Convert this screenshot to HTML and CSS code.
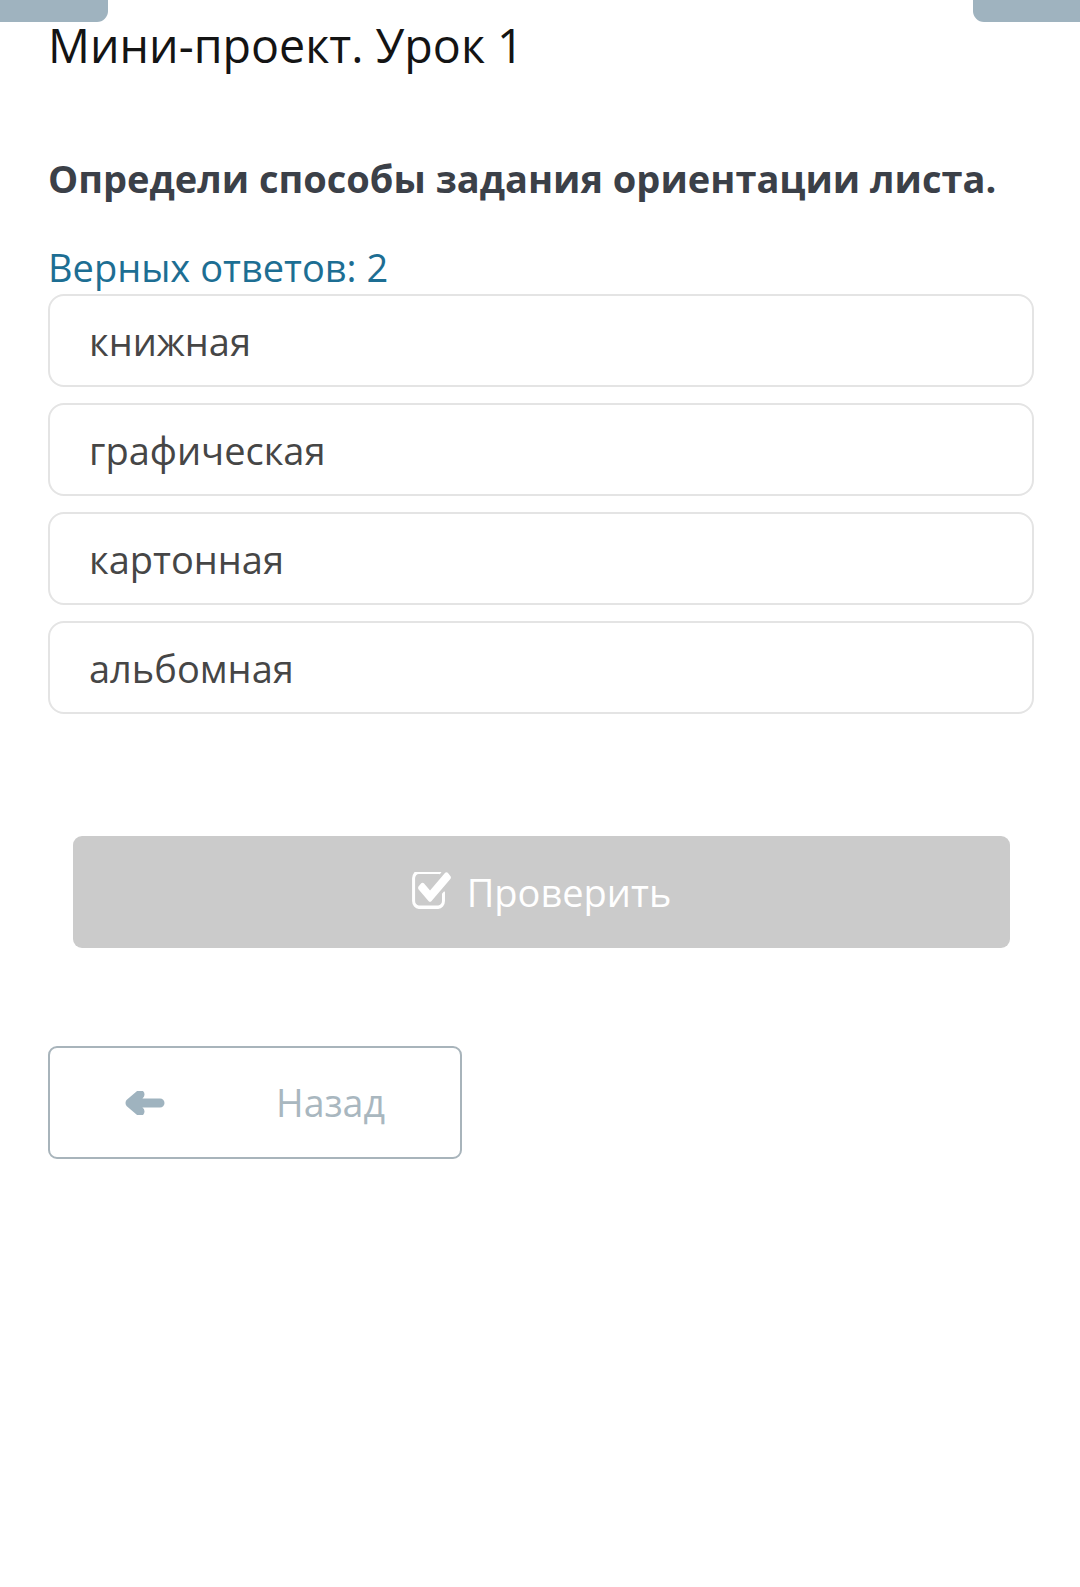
FILE: index.html
```html
<!DOCTYPE html>
<html lang="ru">
<head>
<meta charset="utf-8">
<title>Мини-проект. Урок 1</title>
<link rel="stylesheet" href="styles.css">
</head>
<body>
<div class="page">
  <div class="tabs">
    <div class="tab tab-left"></div>
    <div class="tab tab-right"></div>
  </div>
  <main class="content">
    <h1 class="title">Мини-проект. Урок 1</h1>
    <h2 class="question">Определи способы задания ориентации листа.</h2>
    <div class="hint">Верных ответов: 2</div>
    <ul class="options">
      <li class="option">книжная</li>
      <li class="option">графическая</li>
      <li class="option">картонная</li>
      <li class="option">альбомная</li>
    </ul>
    <div class="check-wrap">
      <button class="check-btn" type="button">
        <svg class="check-icon" viewBox="60 185 1670 1355" preserveAspectRatio="none" aria-hidden="true">
          <path fill="#ffffff" d="M1472 930v318q0 119-84.5 203.5t-203.5 84.5h-832q-119 0-203.5-84.5t-84.5-203.5v-832q0-119 84.5-203.5t203.5-84.5h832q63 0 117 25 15 7 18 23 3 17-9 29l-49 49q-10 10-23 10-3 0-9-2-23-6-45-6h-832q-66 0-113 47t-47 113v832q0 66 47 113t113 47h832q66 0 113-47t47-113v-254q0-13 9-22l64-64q10-10 23-10 6 0 12 3 20 8 20 29zm231-489l-814 814q-24 24-57 24t-57-24l-430-430q-24-24-24-57t24-57l110-110q24-24 57-24t57 24l263 263 647-647q24-24 57-24t57 24l110 110q24 24 24 57t-24 57z"/>
        </svg>
        <span class="check-label">Проверить</span>
      </button>
    </div>
    <button class="back-btn" type="button">
      <svg class="back-icon" viewBox="0 0 40 24" aria-hidden="true">
        <path d="M15 3.5 L5 12 L15 20.5 M5 12 H35" fill="none" stroke="#9fb3bf" stroke-width="9" stroke-linecap="round" stroke-linejoin="round"/>
      </svg>
      <span class="back-label">Назад</span>
    </button>
  </main>
</div>
</body>
</html>
```
FILE: styles.css
```css
* {
  box-sizing: border-box;
}

html, body {
  margin: 0;
  padding: 0;
  background: #ffffff;
}

body {
  font-family: "Open Sans", "Noto Sans", "DejaVu Sans", sans-serif;
  width: 1080px;
  min-height: 1587px;
}

.tabs {
  display: flex;
  justify-content: space-between;
  height: 22px;
}

.tab {
  height: 22px;
  background: #9fb3bf;
}

.tab-left {
  width: 108px;
  border-bottom-right-radius: 11px;
}

.tab-right {
  width: 107px;
  border-bottom-left-radius: 11px;
}

.content {
  padding: 0 46px 0 48px;
  display: flex;
  flex-direction: column;
}

.title {
  margin: -4px 0 0;
  font-size: 46.6px;
  line-height: 54px;
  font-weight: 400;
  color: #141414;
}

.question {
  margin: 81px 0 0;
  font-size: 38px;
  line-height: 50px;
  font-weight: 700;
  color: #3b4048;
}

.hint {
  margin-top: 39px;
  font-size: 38px;
  line-height: 50px;
  color: #1d6e93;
}

.options {
  list-style: none;
  margin: 2px 0 0;
  padding: 0;
  display: flex;
  flex-direction: column;
  gap: 16px;
}

.option {
  height: 93px;
  border: 2px solid #e4e4e4;
  border-radius: 16px;
  padding: 0 0 0 39px;
  display: flex;
  align-items: center;
  font-size: 38px;
  line-height: 50px;
  color: #464646;
}

.check-wrap {
  margin-top: 122px;
  padding: 0 24px 0 25px;
}

.check-btn {
  width: 100%;
  height: 112px;
  border: none;
  border-radius: 9px;
  background: #cbcbcb;
  display: flex;
  align-items: center;
  justify-content: center;
  gap: 16px;
  padding: 0;
  font-family: inherit;
  cursor: pointer;
}

.check-icon {
  width: 39px;
  height: 37px;
  margin-top: -3px;
}

.check-label {
  font-size: 38px;
  line-height: 50px;
  color: #ffffff;
}

.back-btn {
  margin-top: 98px;
  width: 414px;
  height: 113px;
  border: 2px solid #a8b4bb;
  border-radius: 9px;
  background: #ffffff;
  display: flex;
  align-items: center;
  padding: 0 0 0 75px;
  font-family: inherit;
  cursor: pointer;
}

.back-icon {
  width: 40px;
  height: 24px;
}

.back-label {
  margin-left: 111px;
  font-size: 37.5px;
  line-height: 50px;
  color: #a9b7bf;
}
```
